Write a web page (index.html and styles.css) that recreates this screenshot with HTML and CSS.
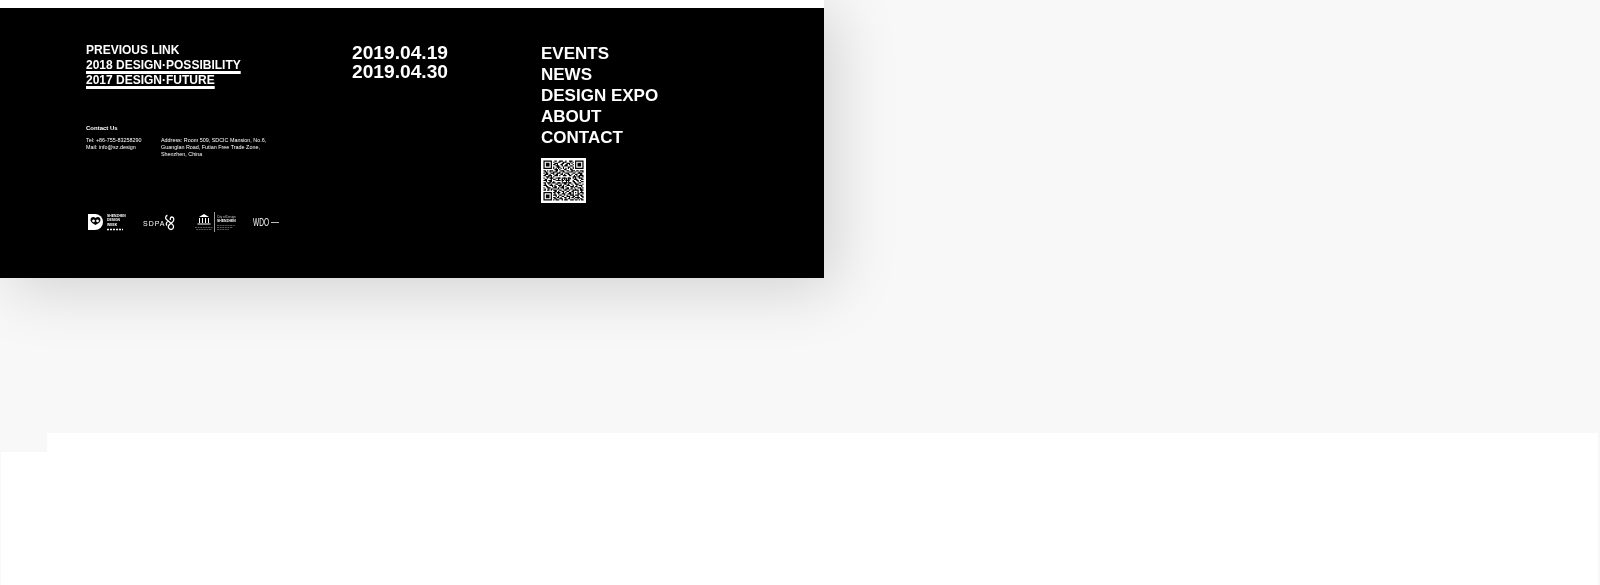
FILE: index.html
```html
<!DOCTYPE html>
<html lang="en">
<head>
    <meta charset="UTF-8">
    <title>Shenzhen Design Week</title>
    <link rel="stylesheet" href="styles.css">
</head>
<body>
    <div class="panel">
        <footer class="footer">
            <div class="col-info">
                <div class="links">
                    <div>PREVIOUS LINK</div>
                    <div><a href="#">2018 DESIGN·POSSIBILITY</a></div>
                    <div><a href="#">2017 DESIGN·FUTURE</a></div>
                </div>
                <div class="contact">
                    <h4>Contact Us</h4>
                    <div class="contact-row">
                        <p class="contact-tel">Tel: +86-755-83258290<br>Mail: info@sz.design</p>
                        <p>Address: Room 509, SDCIC Mansion, No.6,<br>Guanglan Road, Futian Free Trade Zone,<br>Shenzhen, China</p>
                    </div>
                </div>
                <div class="logos">
                    <svg class="logo-sdw" width="41" height="20" viewBox="0 0 41 20">
                        <path fill="#fff" d="M0 2h7a8 8 0 0 1 0 16H0z"/>
                        <path fill="#000" d="M7.500 6c-2-2-5-1-5 2 0 2 3 4 5 5 2-1 5-3 5-5 0-3-3-4-5-2z"/>
                        <path fill="#fff" d="M5.500 7.500a1.400 1.400 0 1 0 .1 0zM9.500 7.500a1.400 1.400 0 1 0 .1 0z"/>
                        <text class="logo-small" x="19" y="4.500">SHENZHEN</text>
                        <text class="logo-small" x="19" y="9">DESIGN</text>
                        <text class="logo-small" x="19" y="13.500">WEEK</text>
                        <path stroke="#fff" stroke-width="1.500" stroke-dasharray="2 1" d="M19 17.500h16"/>
                    </svg>
                    <svg class="logo-sdpa" width="33" height="17" viewBox="0 0 33 17">
                        <text class="logo-sdpa-text" x="0" y="11.500">SDPA</text>
                        <path fill="none" stroke="#fff" stroke-width="1.300" d="M24.500 1.500c-2 0-2.500 3-1 4l6 5c2 1.500 1 5-1.500 5s-3.500-3-2-4.500l3.500-3c2-1.500 1.500-5-.5-5-1.500 0-2 1.500-1.500 3M25.500 7c-2 1-3 3-1.500 4.500"/>
                    </svg>
                    <svg class="logo-unesco" width="42" height="20" viewBox="0 0 42 20">
                        <path fill="#fff" d="M5 5l5-3 5 3zM5 6h1v5H5zM8 6h1v5H8zM11 6h1v5h-1zM14 6h1v5h-1zM3.500 11.500h13v1h-13z"/>
                        <path stroke="#777" stroke-width=".7" stroke-dasharray="2 .6" d="M1 15.500h18M2 17.500h16"/>
                        <path stroke="#999" d="M20.500 0v20"/>
                        <text class="logo-tiny" x="23" y="6">City of Design</text>
                        <text class="logo-small" x="23" y="10">SHENZHEN</text>
                        <path stroke="#777" stroke-width=".7" stroke-dasharray="2 .6" d="M23 13.500h18M23 15.500h16M23 17.500h12"/>
                    </svg>
                    <svg class="logo-wdo" width="27" height="12" viewBox="0 0 27 12">
                        <text class="logo-wdo-text" x="0" y="10" textLength="16" lengthAdjust="spacingAndGlyphs">WDO</text>
                        <path stroke="#bbb" d="M18 6.500h8"/>
                    </svg>
                </div>
            </div>
            <div class="col-dates">
                <div>2019.04.19</div>
                <div>2019.04.30</div>
            </div>
            <div class="col-nav">
                <nav class="nav">
                    <a href="#">EVENTS</a>
                    <a href="#">NEWS</a>
                    <a href="#">DESIGN EXPO</a>
                    <a href="#">ABOUT</a>
                    <a href="#">CONTACT</a>
                </nav>
                <svg class="qr" width="45" height="45" viewBox="-2 -2 37 37">
                    <rect x="-2" y="-2" width="37" height="37" fill="#fff"/>
                    <path fill="none" stroke="#000" d="M0 .5h7M9 .5h2M13 .5h3M18 .5h1M21 .5h3M26 .5h7
                    M0 1.500h1M6 1.500h1M8 1.500h1M12 1.500h2M16 1.500h3M22 1.500h1M24 1.500h1M26 1.500h1M32 1.500h1
                    M0 2.500h1M2 2.500h3M6 2.500h1M9 2.500h3M15 2.500h2M19 2.500h3M23 2.500h1M26 2.500h1M28 2.500h3M32 2.500h1
                    M0 3.500h1M2 3.500h3M6 3.500h1M8 3.500h2M11 3.500h1M14 3.500h2M18 3.500h2M21 3.500h1M24 3.500h1M26 3.500h1M28 3.500h3M32 3.500h1
                    M0 4.500h1M2 4.500h3M6 4.500h1M10 4.500h3M15 4.500h1M17 4.500h3M22 4.500h2M26 4.500h1M28 4.500h3M32 4.500h1
                    M0 5.500h1M6 5.500h1M8 5.500h1M11 5.500h3M16 5.500h1M20 5.500h2M24 5.500h1M26 5.500h1M32 5.500h1
                    M0 6.500h7M8 6.500h1M10 6.500h1M12 6.500h1M14 6.500h1M16 6.500h1M18 6.500h1M20 6.500h1M22 6.500h1M24 6.500h1M26 6.500h7
                    M9 7.500h3M13 7.500h1M17 7.500h2M22 7.500h2
                    M0 8.500h2M3 8.500h1M5 8.500h3M10 8.500h2M14 8.500h3M19 8.500h2M23 8.500h3M27 8.500h2M30 8.500h3
                    M1 9.500h2M5 9.500h1M8 9.500h3M13 9.500h1M16 9.500h2M21 9.500h3M26 9.500h1M29 9.500h1M32 9.500h1
                    M0 10.500h1M2 10.500h2M6 10.500h3M11 10.500h3M15 10.500h1M18 10.500h3M24 10.500h2M28 10.500h4
                    M1 11.500h3M5 11.500h1M8 11.500h1M10 11.500h2M14 11.500h2M17 11.500h1M20 11.500h2M23 11.500h1M26 11.500h2M30 11.500h2
                    M0 12.500h2M4 12.500h3M9 12.500h3M13 12.500h1M16 12.500h3M21 12.500h2M25 12.500h1M27 12.500h1M29 12.500h4
                    M2 13.500h3M6 13.500h1M8 13.500h1M24 13.500h3M28 13.500h2M32 13.500h1
                    M0 14.500h1M3 14.500h1M5 14.500h3M10 14.500h1M12 14.500h2M16 14.500h2M20 14.500h2M24 14.500h1M26 14.500h1M29 14.500h3
                    M1 15.500h2M6 15.500h1M8 15.500h2M12 15.500h1M15 15.500h1M17 15.500h1M20 15.500h1M25 15.500h3M31 15.500h2
                    M0 16.500h3M4 16.500h3M10 16.500h1M12 16.500h2M15 16.500h2M18 16.500h3M24 16.500h1M27 16.500h2M30 16.500h1
                    M2 17.500h1M5 17.500h2M8 17.500h1M24 17.500h2M28 17.500h1M31 17.500h2
                    M0 18.500h2M3 18.500h3M7 18.500h3M12 18.500h2M16 18.500h3M21 18.500h2M25 18.500h2M29 18.500h2
                    M1 19.500h1M4 19.500h1M6 19.500h1M10 19.500h2M14 19.500h1M17 19.500h2M20 19.500h1M23 19.500h1M26 19.500h3M32 19.500h1
                    M0 20.500h3M5 20.500h3M9 20.500h1M12 20.500h3M16 20.500h1M19 20.500h3M24 20.500h1M27 20.500h1M29 20.500h3
                    M2 21.500h2M7 21.500h1M9 21.500h2M13 21.500h1M15 21.500h2M18 21.500h1M22 21.500h3M26 21.500h2M31 21.500h1
                    M0 22.500h1M3 22.500h3M8 22.500h3M12 22.500h1M14 22.500h3M19 22.500h2M23 22.500h1M25 22.500h1M28 22.500h3M32 22.500h1
                    M1 23.500h1M4 23.500h1M6 23.500h2M11 23.500h2M16 23.500h1M18 23.500h3M22 23.500h2M26 23.500h1M30 23.500h2
                    M0 24.500h2M3 24.500h2M6 24.500h1M8 24.500h3M13 24.500h2M17 24.500h2M21 24.500h1M24 24.500h5M30 24.500h3
                    M9 25.500h2M12 25.500h1M15 25.500h2M19 25.500h2M23 25.500h2M28 25.500h1M31 25.500h1
                    M0 26.500h7M8 26.500h2M11 26.500h3M16 26.500h1M18 26.500h1M21 26.500h2M24 26.500h1M26 26.500h1M28 26.500h1M30 26.500h3
                    M0 27.500h1M6 27.500h1M9 27.500h1M12 27.500h1M15 27.500h3M20 27.500h3M24 27.500h1M28 27.500h2M32 27.500h1
                    M0 28.500h1M2 28.500h3M6 28.500h1M8 28.500h3M13 28.500h2M17 28.500h1M19 28.500h1M22 28.500h3M26 28.500h3M30 28.500h2
                    M0 29.500h1M2 29.500h3M6 29.500h1M10 29.500h1M12 29.500h1M15 29.500h2M19 29.500h3M24 29.500h2M28 29.500h1M31 29.500h2
                    M0 30.500h1M2 30.500h3M6 30.500h1M8 30.500h2M11 30.500h2M14 30.500h1M17 30.500h2M21 30.500h1M23 30.500h2M26 30.500h4M32 30.500h1
                    M0 31.500h1M6 31.500h1M9 31.500h2M13 31.500h3M18 31.500h1M20 31.500h2M25 31.500h1M28 31.500h1M30 31.500h2
                    M0 32.500h7M8 32.500h1M10 32.500h3M15 32.500h1M17 32.500h3M22 32.500h3M26 32.500h2M29 32.500h1M31 32.500h2"/>
                    <path fill="none" stroke="#000" stroke-width=".8" d="M11 14.500h3M11 16.500h3M11 18.500h3M15.500 14v5M17 14.500h2v4h-2M20 14.500h2.500l-2.500 4h2.500"/>
                </svg>
            </div>
        </footer>
    </div>
    <div class="lower">
        <div class="lower-tab"></div>
        <div class="lower-body"></div>
    </div>
</body>
</html>
```
FILE: styles.css
```css
html, body {
    height: 100%;
}
body {
    margin: 0;
    overflow: hidden;
    display: flex;
    flex-direction: column;
    background: #f8f8f8;
    font-family: "Liberation Sans", Arial, sans-serif;
    color: #fff;
}
.panel {
    width: 824px;
    height: 278px;
    padding-top: 8px;
    box-sizing: border-box;
    flex: none;
    background: #fff;
    box-shadow: 10px 10px 60px rgba(0,0,0,0.16);
}
.footer {
    height: 270px;
    box-sizing: border-box;
    padding: 35px 0 0 86px;
    display: flex;
    background: #000;
    filter: blur(0.3px);
}
.col-info {
    width: 266px;
    flex: none;
}
.links {
    font-size: 12px;
    font-weight: bold;
    line-height: 15px;
}
.links a {
    color: #fff;
    text-decoration: underline 2.5px;
    text-underline-offset: 2px;
}
.contact {
    margin-top: 36px;
}
.contact h4 {
    margin: 0;
    font-size: 6px;
    line-height: 8px;
}
.contact-row {
    display: flex;
    margin-top: 5px;
    font-size: 5.4px;
    line-height: 7px;
}
.contact-row p {
    margin: 0;
}
.contact-tel {
    width: 75px;
    flex: none;
}
.logos {
    display: flex;
    align-items: center;
    margin: 54px 0 0 2px;
}
.logo-sdpa {
    margin-left: 14px;
}
.logo-unesco {
    margin-left: 18px;
}
.logo-wdo {
    margin-left: 17px;
}
.logo-small {
    font-size: 3.4px;
    font-weight: bold;
    fill: #fff;
}
.logo-tiny {
    font-size: 3px;
    fill: #ccc;
}
.logo-sdpa-text {
    font-size: 7px;
    letter-spacing: 1px;
    fill: #fff;
}
.logo-wdo-text {
    font-size: 11px;
    fill: #fff;
}
.col-dates {
    width: 188px;
    flex: none;
    font-size: 19.2px;
    font-weight: bold;
    line-height: 19px;
}
.nav a {
    display: block;
    color: #fff;
    text-decoration: none;
    font-size: 17px;
    font-weight: bold;
    line-height: 21px;
}
.nav {
    padding-left: 1px;
}
.qr {
    display: block;
    margin: 10px 0 0 1px;
}
.lower {
    flex: 1;
    margin: 155px 2px 0 1px;
    display: flex;
    flex-direction: column;
}
.lower-tab {
    height: 19px;
    margin-left: 46px;
    background: #fff;
}
.lower-body {
    flex: 1;
    background: #fff;
}
```
